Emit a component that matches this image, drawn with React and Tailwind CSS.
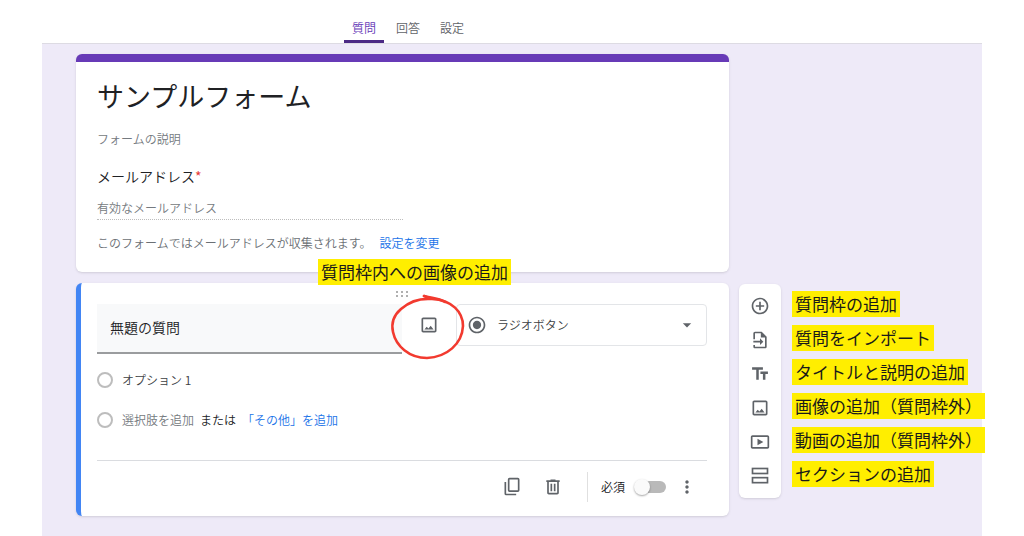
import { useState } from 'react';
import { MdAddCircleOutline, MdArrowDropDown, MdMoreVert, MdRadioButtonChecked, MdTextFields } from 'react-icons/md';

const TABS = ['質問', '回答', '設定'];

function ImageIcon() {
  return (
    <svg viewBox="0 0 24 24" className="size-5" fill="currentColor" aria-hidden="true">
      <path d="M19 3H5c-1.100 0-2 .9-2 2v14c0 1.100.9 2 2 2h14c1.100 0 2-.9 2-2V5c0-1.100-.9-2-2-2zm0 16H5V5h14v14z" />
      <path d="M6.500 17.500l2.700-3.500 2.200 2.300 2.600-3.300 3.500 4.500z" />
    </svg>
  );
}

function ImportIcon() {
  return (
    <svg viewBox="0 0 24 24" className="size-5" fill="currentColor" aria-hidden="true">
      <path d="M14 2H6c-1.100 0-2 .9-2 2v7h2V4h7v5h5v11H6v-2H4v2c0 1.100.9 2 2 2h12c1.100 0 2-.9 2-2V8l-6-6z" />
      <path d="M12 18l4-4-4-4v3H4v2h8z" />
    </svg>
  );
}

function VideoIcon() {
  return (
    <svg viewBox="0 0 24 24" className="size-5" fill="currentColor" aria-hidden="true">
      <path d="M21 4H3c-1.100 0-2 .9-2 2v12c0 1.100.9 2 2 2h18c1.100 0 2-.9 2-2V6c0-1.100-.9-2-2-2zm0 14H3V6h18v12z" />
      <path d="M9 8v8l7-4z" />
    </svg>
  );
}

function SectionIcon() {
  return (
    <svg viewBox="0 0 24 24" className="size-5" fill="none" stroke="currentColor" strokeWidth="2" aria-hidden="true">
      <rect x="3" y="3" width="18" height="6" />
      <rect x="3" y="14" width="18" height="6" />
    </svg>
  );
}

function CopyIcon() {
  return (
    <svg viewBox="0 0 24 24" className="size-5" fill="none" stroke="currentColor" strokeWidth="2" aria-hidden="true">
      <rect x="8" y="2" width="12" height="15" rx="1" />
      <path d="M4 6v14c0 .6.4 1 1 1h12" />
    </svg>
  );
}

function TrashIcon() {
  return (
    <svg viewBox="0 0 24 24" className="size-5" fill="currentColor" aria-hidden="true">
      <path d="M15 4V3H9v1H4v2h1v13c0 1.100.9 2 2 2h10c1.100 0 2-.9 2-2V6h1V4h-5zm2 15H7V6h10v13z" />
      <path d="M9 8h2v9H9zM13 8h2v9h-2z" />
    </svg>
  );
}

const TOOLS = [
  { label: '質問枠の追加', icon: <MdAddCircleOutline className="size-5" /> },
  { label: '質問をインポート', icon: <ImportIcon /> },
  { label: 'タイトルと説明の追加', icon: <MdTextFields className="size-5" /> },
  { label: '画像の追加（質問枠外）', icon: <ImageIcon /> },
  { label: '動画の追加（質問枠外）', icon: <VideoIcon /> },
  { label: 'セクションの追加', icon: <SectionIcon /> },
];

function Note({ children }) {
  return (
    <span className="block h-[26px] w-fit whitespace-nowrap bg-[#ffee00] px-[3px] text-[17px] leading-[26px] font-normal text-[#1a1a1a]">
      {children}
    </span>
  );
}

function Header({ tab, setTab }) {
  return (
    <header className="flex h-11 items-end gap-1 border-b border-[#dddbe3] pl-[302px]">
      {TABS.map((name) => (
        <button
          key={name}
          onClick={() => setTab(name)}
          className={
            tab === name
              ? 'h-8 w-10 border-b-3 border-[#4c2a85] pt-1 text-xs text-[#673ab7]'
              : 'h-8 w-10 border-b-3 border-transparent pt-1 text-xs text-[#5f6368]'
          }
        >
          {name}
        </button>
      ))}
    </header>
  );
}

function TitleCard() {
  return (
    <section className="rounded-md border-t-8 border-[#673ab7] bg-white px-[21px] pt-[14px] pb-[19px] shadow-sm">
      <h1 className="text-[27px] leading-10 font-normal text-[#202124]">サンプルフォーム</h1>
      <input
        aria-label="フォームの説明"
        placeholder="フォームの説明"
        className="mt-3 block h-5 w-full text-xs outline-none placeholder:text-[#757a80]"
      />
      <label htmlFor="email" className="mt-[18px] block text-sm leading-5 text-[#202124]">
        メールアドレス<span className="font-normal text-[#e53935]">*</span>
      </label>
      <input
        id="email"
        type="email"
        placeholder="有効なメールアドレス"
        className="mt-[10px] block h-6 w-1/2 border-b border-dotted border-[#bdbdbd] pb-px text-xs outline-none placeholder:text-[#757a80]"
      />
      <p className="mt-[13px] text-xs leading-5 text-[#6b7075]">
        このフォームではメールアドレスが収集されます。
        <a href="#settings" className="ml-2 text-[#1a73e8]">設定を変更</a>
      </p>
    </section>
  );
}

function QuestionCard() {
  const [title, setTitle] = useState('無題の質問');
  const [option, setOption] = useState('オプション 1');
  const [required, setRequired] = useState(false);

  return (
    <section className="rounded-md border-l-5 border-[#4285f4] bg-white px-4 pt-[7px] pb-[3px] shadow-sm">
      <div className="pr-[5px]">
        <svg viewBox="0 0 14 8" className="mx-auto mb-[6px] h-2 w-[14px]" fill="#b0b0b0" aria-hidden="true">
          <path d="M0 1h2v2H0zM5 1h2v2H5zM10 1h2v2h-2zM0 5h2v2H0zM5 5h2v2H5zM10 5h2v2h-2z" />
        </svg>
      </div>

      <div className="mr-[6px] flex items-start">
        <input
          aria-label="質問"
          value={title}
          onChange={(e) => setTitle(e.target.value)}
          className="h-[50px] min-w-0 flex-1 border-b-2 border-[#9a9c9e] bg-[#f8f9fa] px-[13px] pb-[2px] text-sm text-[#202124] outline-none"
        />
        <div className="relative flex h-[42px] w-[54px] items-center justify-center">
          <button aria-label="画像を追加" className="text-[#5f6368]">
            <ImageIcon />
          </button>
          <svg
            viewBox="0 0 80 72"
            className="pointer-events-none absolute -top-[14px] -left-[14px] z-10 h-[72px] w-20 max-w-none"
            fill="none"
            stroke="#f23a2f"
            strokeWidth="2.600"
            strokeLinecap="round"
            strokeLinejoin="round"
            aria-hidden="true"
          >
            <path d="M36 6c8 2 15 2 21 6" />
            <path d="M36 6l8 3C32 8 21 12 13 19 6 25 3 33 5 42c3 14 16 26 34 26 20-1 35-14 36-32C75 22 64 10 44 9" />
          </svg>
        </div>
        <div className="relative h-[42px] w-[251px] text-[#5f6368]">
          <MdRadioButtonChecked className="pointer-events-none absolute top-[11px] left-[11px] size-5" />
          <select
            aria-label="質問の種類"
            className="size-full appearance-none rounded-sm border border-[#e3e5e8] pl-10 text-xs text-[#3c4043] outline-none"
          >
            <option>ラジオボタン</option>
          </select>
          <MdArrowDropDown className="pointer-events-none absolute top-[11px] right-[10px] size-5" />
        </div>
      </div>

      <div className="mt-[6px] flex h-10 items-center gap-[9px]">
        <span className="size-4 rounded-full border-2 border-[#bdbdbd]" />
        <input
          aria-label="選択肢 1"
          value={option}
          onChange={(e) => setOption(e.target.value)}
          className="flex-1 text-xs text-[#3c4043] outline-none"
        />
      </div>
      <div className="flex h-10 items-center text-xs">
        <span className="mr-[9px] size-4 rounded-full border-2 border-[#bdbdbd]" />
        <button className="text-[#757a80]">選択肢を追加</button>
        <span className="mx-[6px] text-[#202124]">または</span>
        <button className="text-[#1a73e8]">「その他」を追加</button>
      </div>

      <div className="mt-5 mr-[6px] border-t border-[#dadce0]" />
      <div className="flex h-[52px] items-center justify-end pr-4 text-[#5f6368]">
        <button aria-label="コピーを作成"><CopyIcon /></button>
        <button aria-label="削除" className="ml-[21px]"><TrashIcon /></button>
        <span className="mr-[13px] ml-6 h-[30px] w-px bg-[#e0e0e0]" />
        <label htmlFor="required" className="text-xs text-[#202124]">必須</label>
        <input
          id="required"
          type="checkbox"
          checked={required}
          onChange={(e) => setRequired(e.target.checked)}
          className="relative ml-[15px] h-3 w-[26px] appearance-none rounded-full bg-[#b9b9b9] before:absolute before:-top-[2px] before:-left-[6px] before:size-4 before:rounded-full before:bg-[#fafafa] before:shadow-[0_1px_2px_rgba(0,0,0,0.35)] checked:before:left-4"
        />
        <button aria-label="その他のオプション" className="ml-[11px]">
          <MdMoreVert className="size-5" />
        </button>
      </div>
    </section>
  );
}

function Toolbar() {
  return (
    <aside className="mt-[230px] flex w-[243px] shrink-0 items-start gap-[11px]">
      <div className="flex w-[42px] shrink-0 flex-col rounded-md bg-white py-[5px] text-[#5f6368] shadow-sm">
        {TOOLS.map((tool) => (
          <button key={tool.label} aria-label={tool.label} className="flex h-[34px] items-center justify-center">
            {tool.icon}
          </button>
        ))}
      </div>
      <ul className="mt-[7px] flex flex-col gap-2">
        {TOOLS.map((tool) => (
          <li key={tool.label}><Note>{tool.label}</Note></li>
        ))}
      </ul>
    </aside>
  );
}

export default function App() {
  const [tab, setTab] = useState('質問');

  return (
    <div className="flex min-h-screen flex-col bg-white px-[42px] font-['Noto_Sans_CJK_JP',sans-serif] font-[350]">
      <Header tab={tab} setTab={setTab} />
      <main className="flex flex-1 gap-[10px] bg-[#eeeaf8] pt-[10px] pb-5 pl-[34px]">
        <div className="relative flex min-w-0 flex-1 flex-col gap-[11px]">
          <TitleCard />
          <QuestionCard />
          <div className="absolute top-[205px] left-[242px]">
            <Note>質問枠内への画像の追加</Note>
          </div>
        </div>
        <Toolbar />
      </main>
    </div>
  );
}
